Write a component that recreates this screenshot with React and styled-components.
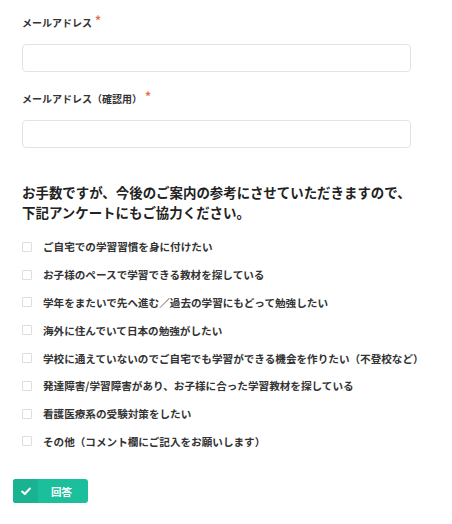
import React from "react";
import styled, { createGlobalStyle } from "styled-components";

const Global = createGlobalStyle`
  html, body { margin: 0; padding: 0; background: #fff; }
  body { font-family: "Noto Sans CJK JP", "Noto Sans", sans-serif; color: #333; }
  * { box-sizing: border-box; }
`;

const Page = styled.div`
  padding: 16px 0 20px 22px;
  width: 452px;
`;

const Field = styled.div`
  display: flex;
  flex-direction: column;
  margin-bottom: ${(p) => p.$mb || 0}px;
`;

const Label = styled.label`
  font-size: 10px;
  font-weight: 700;
  line-height: 14px;
  height: 14px;
  color: #333;
  display: flex;
  align-items: center;
  margin-bottom: 14px;
`;

const Required = styled.span`
  color: #e0704a;
  font-size: 12px;
  margin-left: 3px;
  position: relative;
  top: -3px;
`;

const Input = styled.input`
  width: 389px;
  height: 28px;
  border: 1px solid #e3e3e3;
  border-radius: 4px;
  outline: none;
  background: #fff;
`;

const Heading = styled.p`
  margin: 34px 0 11px;
  font-size: 13.45px;
  line-height: 20px;
  font-weight: 700;
  color: #222;
  white-space: nowrap;
`;

const OptionList = styled.div`
  display: flex;
  flex-direction: column;
`;

const Option = styled.label`
  display: flex;
  align-items: center;
  height: 27.8px;
  white-space: nowrap;
`;

const Box = styled.span`
  width: 10px;
  height: 10px;
  border: 1px solid #dedede;
  border-radius: 1px;
  background: #fff;
  margin-right: 11px;
  flex: none;
`;

const OptionText = styled.span`
  font-size: 10.6px;
  font-weight: 700;
  color: #333;
`;

const SubmitButton = styled.button`
  margin: 24px 0 0 -9px;
  display: flex;
  align-items: stretch;
  width: 75px;
  height: 24px;
  padding: 0;
  border: none;
  border-radius: 3px;
  overflow: hidden;
  background: #1bbf9b;
  color: #fff;
  cursor: pointer;
`;

const IconPart = styled.span`
  width: 25px;
  display: flex;
  align-items: center;
  justify-content: center;
  background: #19b391;
`;

const ButtonText = styled.span`
  flex: 1;
  display: flex;
  align-items: center;
  justify-content: center;
  font-family: "Noto Sans CJK JP", sans-serif;
  font-size: 10.5px;
  font-weight: 700;
  padding-right: 3px;
`;

const options = [
  "ご自宅での学習習慣を身に付けたい",
  "お子様のペースで学習できる教材を探している",
  "学年をまたいで先へ進む／過去の学習にもどって勉強したい",
  "海外に住んでいて日本の勉強がしたい",
  "学校に通えていないのでご自宅でも学習ができる機会を作りたい（不登校など）",
  "発達障害/学習障害があり、お子様に合った学習教材を探している",
  "看護医療系の受験対策をしたい",
  "その他（コメント欄にご記入をお願いします）",
];

export default function App() {
  return (
    <>
      <Global />
      <Page>
        <Field $mb={20}>
          <Label>
            メールアドレス<Required>*</Required>
          </Label>
          <Input type="email" />
        </Field>
        <Field>
          <Label>
            メールアドレス（確認用）<Required>*</Required>
          </Label>
          <Input type="email" />
        </Field>
        <Heading>
          お手数ですが、今後のご案内の参考にさせていただきますので、
          <br />
          下記アンケートにもご協力ください。
        </Heading>
        <OptionList>
          {options.map((o) => (
            <Option key={o}>
              <Box />
              <OptionText>{o}</OptionText>
            </Option>
          ))}
        </OptionList>
        <SubmitButton>
          <IconPart>
            <svg width="10" height="9" viewBox="0 0 10 9">
              <polyline
                points="1.2,4.6 3.8,7 8.8,1.6"
                fill="none"
                stroke="#fff"
                strokeWidth="2.1"
                strokeLinecap="round"
                strokeLinejoin="round"
              />
            </svg>
          </IconPart>
          <ButtonText>回答</ButtonText>
        </SubmitButton>
      </Page>
    </>
  );
}
